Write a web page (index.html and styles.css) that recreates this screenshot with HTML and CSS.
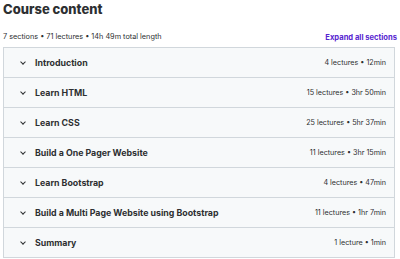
FILE: index.html
```html
<!DOCTYPE html>
<html lang="en">
  <head>
    <meta charset="UTF-8" />
    <title>Course content</title>
    <link rel="stylesheet" href="styles.css">
  </head>
  <body>
    <div class="curriculum">
      <h2 class="title">Course content</h2>
      <div class="meta">
        <span>7 sections • 71 lectures • 14h 49m total length</span>
        <button class="expand">Expand all sections</button>
      </div>

      <div class="sections">
        <div class="section">
          <span class="chevron"></span>
          <span class="name">Introduction</span>
          <span class="stats">4 lectures • 12min</span>
        </div>
        <div class="section">
          <span class="chevron"></span>
          <span class="name">Learn HTML</span>
          <span class="stats">15 lectures • 3hr 50min</span>
        </div>
        <div class="section">
          <span class="chevron"></span>
          <span class="name">Learn CSS</span>
          <span class="stats">25 lectures • 5hr 37min</span>
        </div>
        <div class="section">
          <span class="chevron"></span>
          <span class="name">Build a One Pager Website</span>
          <span class="stats">11 lectures • 3hr 15min</span>
        </div>
        <div class="section">
          <span class="chevron"></span>
          <span class="name">Learn Bootstrap</span>
          <span class="stats">4 lectures • 47min</span>
        </div>
        <div class="section">
          <span class="chevron"></span>
          <span class="name">Build a Multi Page Website using Bootstrap</span>
          <span class="stats">11 lectures • 1hr 7min</span>
        </div>
        <div class="section">
          <span class="chevron"></span>
          <span class="name">Summary</span>
          <span class="stats">1 lecture • 1min</span>
        </div>
      </div>
    </div>
  </body>
</html>
```

FILE: styles.css
```css
:root {
  --text: #2d2f31;
  --border: #d1d7dc;
  --row-bg: #f7f9fa;
  --purple: #5624d0;
}
body {
  margin: 0;
  background: white;
  font-family: Inter, "Noto Sans", sans-serif;
  color: var(--text);
}
.curriculum {
  padding: 0 3px 0 3px;
}
.title {
  margin: 0;
  padding-top: 2px;
  font-size: 13px;
  line-height: 14px;
  font-weight: 800;
}
.meta {
  display: flex;
  justify-content: space-between;
  align-items: center;
  margin-top: 15px;
  font-size: 7.3px;
  line-height: 12px;
}
.expand {
  border: none;
  background: none;
  padding: 0;
  font-family: inherit;
  font-size: 7.6px;
  font-weight: 700;
  color: var(--purple);
}
.sections {
  margin-top: 4px;
  margin-right: 2px;
  border: 1px solid var(--border);
  border-bottom: none;
}
.section {
  display: flex;
  align-items: center;
  height: 29px;
  padding: 0 8px 0 17px;
  background: var(--row-bg);
  border-bottom: 1px solid var(--border);
}
.chevron {
  width: 3px;
  height: 3px;
  border-right: 1px solid var(--text);
  border-bottom: 1px solid var(--text);
  transform: translateY(-1px) rotate(45deg);
  margin-right: 10px;
}
.name {
  flex: 1;
  font-size: 8.8px;
  font-weight: 700;
}
.stats {
  font-size: 7.2px;
}
```
